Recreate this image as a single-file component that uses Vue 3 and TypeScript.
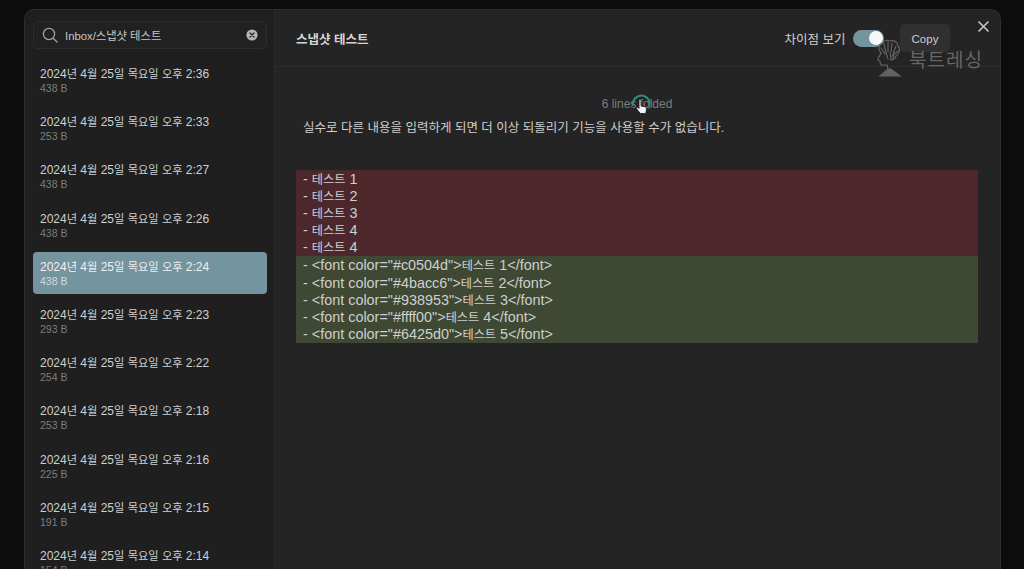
<script setup lang="ts">
interface Version { time: string; size: string; active?: boolean }
interface Seg { text: string; ko: boolean }
const versions: Version[] = [
  { time: '2:36', size: '438 B' },
  { time: '2:33', size: '253 B' },
  { time: '2:27', size: '438 B' },
  { time: '2:26', size: '438 B' },
  { time: '2:24', size: '438 B', active: true },
  { time: '2:23', size: '293 B' },
  { time: '2:22', size: '254 B' },
  { time: '2:18', size: '253 B' },
  { time: '2:16', size: '225 B' },
  { time: '2:15', size: '191 B' },
  { time: '2:14', size: '154 B' },
]
const removed = ['- 테스트 1', '- 테스트 2', '- 테스트 3', '- 테스트 4', '- 테스트 4']
const added = [
  '- <font color="#c0504d">테스트 1</font>',
  '- <font color="#4bacc6">테스트 2</font>',
  '- <font color="#938953">테스트 3</font>',
  '- <font color="#ffff00">테스트 4</font>',
  '- <font color="#6425d0">테스트 5</font>',
]
// Korean runs are set slightly smaller than the Latin runs around them.
function segs(line: string): Seg[] {
  return (line.match(/[가-힣]+|[^가-힣]+/g) ?? []).map((text) => ({
    text,
    ko: /[가-힣]/.test(text),
  }))
}
</script>

<template>
  <div class="page">
    <div class="modal">
      <aside class="sidebar">
        <div class="search">
          <svg class="search-icon" width="16" height="16" viewBox="0 0 16 16" fill="none" stroke="#a3a3a3" stroke-width="1.3" stroke-linecap="round">
            <circle cx="7" cy="7" r="5.6" />
            <path d="M11.2 11.2 15 15" />
          </svg>
          <span class="search-text">Inbox/스냅샷 테스트</span>
          <svg class="clear" width="12" height="12" viewBox="0 0 12 12">
            <circle cx="6" cy="6" r="5.6" fill="#b5b5b5" />
            <path d="M4 4l4 4M8 4l-4 4" stroke="#2a2a2a" stroke-width="1.4" stroke-linecap="round" />
          </svg>
        </div>
        <ul class="list">
          <li v-for="v in versions" :key="v.time" class="item" :class="{ active: v.active }">
            <div class="item-title"><span v-for="(s, i) in segs(`2024년 4월 25일 목요일 오후 ${v.time}`)" :key="i" :class="{ ko: s.ko }">{{ s.text }}</span></div>
            <div class="item-size">{{ v.size }}</div>
          </li>
        </ul>
      </aside>

      <main class="content">
        <header class="header">
          <h1 class="title">스냅샷 테스트</h1>
          <div class="controls">
            <span class="toggle-label">차이점 보기</span>
            <span class="toggle"><span class="knob"></span></span>
            <button class="copy" type="button">Copy</button>
          </div>
        </header>
        <div class="body">
          <div class="folded">6 lines folded</div>
          <p class="sentence">실수로 다른 내용을 입력하게 되면 더 이상 되돌리기 기능을 사용할 수가 없습니다.</p>
          <div class="diff">
            <div class="diff-block removed">
              <div v-for="(l, i) in removed" :key="i" class="diff-line"><span v-for="(s, j) in segs(l)" :key="j" :class="{ ko: s.ko }">{{ s.text }}</span></div>
            </div>
            <div class="diff-block added">
              <div v-for="(l, i) in added" :key="i" class="diff-line"><span v-for="(s, j) in segs(l)" :key="j" :class="{ ko: s.ko }">{{ s.text }}</span></div>
            </div>
          </div>
        </div>

        <svg class="close" width="11" height="11" viewBox="0 0 11 11" stroke="#c4c4c4" stroke-width="1.7" stroke-linecap="round">
          <path d="M1 1l9 9M10 1l-9 9" />
        </svg>

        <div class="cursor-mark">
          <svg width="24" height="30" viewBox="0 0 24 30" fill="none">
            <path d="M3.800 14a8.500 8.500 0 0 1 16.800-2.500" stroke="#2f8f7c" stroke-width="2" stroke-linecap="round" />
            <path d="M20.700 11a8.500 8.500 0 0 1-1 6" stroke="#2f8f7c" stroke-width="2" stroke-linecap="round" opacity=".6" />
            <path d="M10 9.500c0-1.300 2-1.300 2 0V15l4 .8c1.200.3 1.600 1 1.500 2.100l-.5 3.600c-.1.6-.5 1-1.100 1H12c-.5 0-.9-.2-1.200-.6L7.600 17.800c-.7-1.100.8-2.100 1.600-1.200l.8.900z" fill="#f2f2f2" stroke="#111" stroke-width=".8" />
          </svg>
        </div>

        <div class="watermark">
          <svg width="36" height="38" viewBox="0 0 36 38" fill="none" stroke="#626262" stroke-width="1.200" stroke-linecap="round">
            <path d="M10 14C6 9 8 5 12 4c1-3 5-3 7-2 4-1 8 1 8 5 3 3 1 8-2 10-1 3-3 4-6 4" />
            <path d="M13 5l2 9M17 3l0 10M21 4l-1 9M25 7l-3 8M10 9l4 6M27 12l-6 5M15 14l2 6M19 14l1 6M23 15l-1 5" />
            <path d="M10 14c-1 3-4 6-3 7l2 1c0 3 1 5 4 4l3 0 1 4" />
            <path d="M9 37l8-7 3 0 9 7z" fill="#626262" />
          </svg>
          <span class="wm-text">북트레싱</span>
        </div>
      </main>
    </div>
  </div>
</template>

<style>
html, body { margin: 0; background: #0c0c0c; }
</style>

<style scoped>
.page {
  width: 1024px;
  height: 569px;
  overflow: hidden;
  background: #0c0c0c;
  padding: 10px 24px 0 25px;
  box-sizing: border-box;
  font-family: "Liberation Sans", "Noto Sans CJK KR", sans-serif;
}
.modal {
  display: flex;
  height: 620px;
  background: #242424;
  border-radius: 9px 9px 0 0;
  box-shadow: 0 0 0 1px #2e2e2e;
  overflow: hidden;
}
.sidebar {
  width: 250px;
  flex: none;
  box-sizing: border-box;
  padding: 11px 7px 0 8px;
  background: #1f1f1f;
  border-right: 1px solid #2b2b2b;
}
.search {
  display: flex;
  align-items: center;
  height: 28px;
  box-sizing: border-box;
  padding: 0 8px 0 8px;
  background: #212121;
  border: 1px solid #2d2d2d;
  border-radius: 5px;
}
.search-icon { flex: none; }
.search-text {
  flex: 1;
  margin-left: 7px;
  font-size: 11.3px;
  color: #c6c6c6;
}
.clear { flex: none; }
.list {
  list-style: none;
  margin: 10px 0 0;
  padding: 0;
  display: flex;
  flex-direction: column;
  gap: 6.2px;
}
.item {
  height: 42px;
  box-sizing: border-box;
  padding: 8px 7px 0;
  border-radius: 4px;
}
.item.active { background: #74949f; }
.item-title {
  font-size: 12px;
  line-height: 15px;
  color: #d0d0d0;
  white-space: nowrap;
}
.item-title .ko { font-size: 11.2px; }
.item-size {
  font-size: 10.5px;
  line-height: 12px;
  color: #7d7d7d;
}
.item.active .item-title { color: #f0f0f0; }
.item.active .item-size { color: #d3dcdf; }
.content {
  position: relative;
  flex: 1;
  min-width: 0;
  display: flex;
  flex-direction: column;
}
.header {
  display: flex;
  align-items: center;
  justify-content: space-between;
  height: 57px;
  box-sizing: border-box;
  padding: 0 17px 0 21px;
  border-bottom: 1px solid #2e2e2e;
}
.title {
  margin: 0;
  font-size: 12.5px;
  font-weight: 700;
  color: #d6d6d6;
}
.controls {
  display: flex;
  align-items: center;
}
.toggle-label {
  font-size: 12.5px;
  color: #d0d0d0;
}
.toggle {
  position: relative;
  display: block;
  width: 31px;
  height: 17px;
  margin-left: 7.500px;
  border-radius: 9px;
  background: #74949f;
}
.knob {
  position: absolute;
  right: 1px;
  top: 1.5px;
  width: 14px;
  height: 14px;
  border-radius: 50%;
  background: #f8f8f8;
}
.copy {
  width: 50px;
  height: 28px;
  margin-left: 16px;
  margin-right: 33px;
  padding: 2px 0 0;
  border: 0;
  border-radius: 5px;
  background: #303030;
  color: #cfcfcf;
  font: 11.5px "Liberation Sans", "Noto Sans CJK KR", sans-serif;
}
.body {
  padding: 30px 22px 0 21px;
}
.folded {
  text-align: center;
  font-size: 12px;
  line-height: 14px;
  color: #7c7c7c;
}
.sentence {
  margin: 9px 0 0;
  padding-left: 7px;
  font-size: 12.5px;
  line-height: 17px;
  color: #cfcfcf;
}
.diff {
  margin-top: 33px;
}
.diff-block {
  padding: 1px 7px 0;
  font-size: 14.4px;
  line-height: 17.1px;
  color: #cfcfcf;
}
.diff-line { height: 17.1px; white-space: nowrap; }
.diff-line .ko { font-size: 12.2px; }
.removed { background: #4c282c; }
.added { background: #3e4833; }
.close {
  position: absolute;
  right: 11px;
  top: 11px;
}
.cursor-mark {
  position: absolute;
  left: 354px;
  top: 81px;
}
.watermark {
  position: absolute;
  left: 596px;
  top: 29px;
  display: flex;
  align-items: center;
  gap: 2px;
  color: #666666;
  pointer-events: none;
}
.wm-text {
  font-size: 19px;
  letter-spacing: 1px;
}
</style>
